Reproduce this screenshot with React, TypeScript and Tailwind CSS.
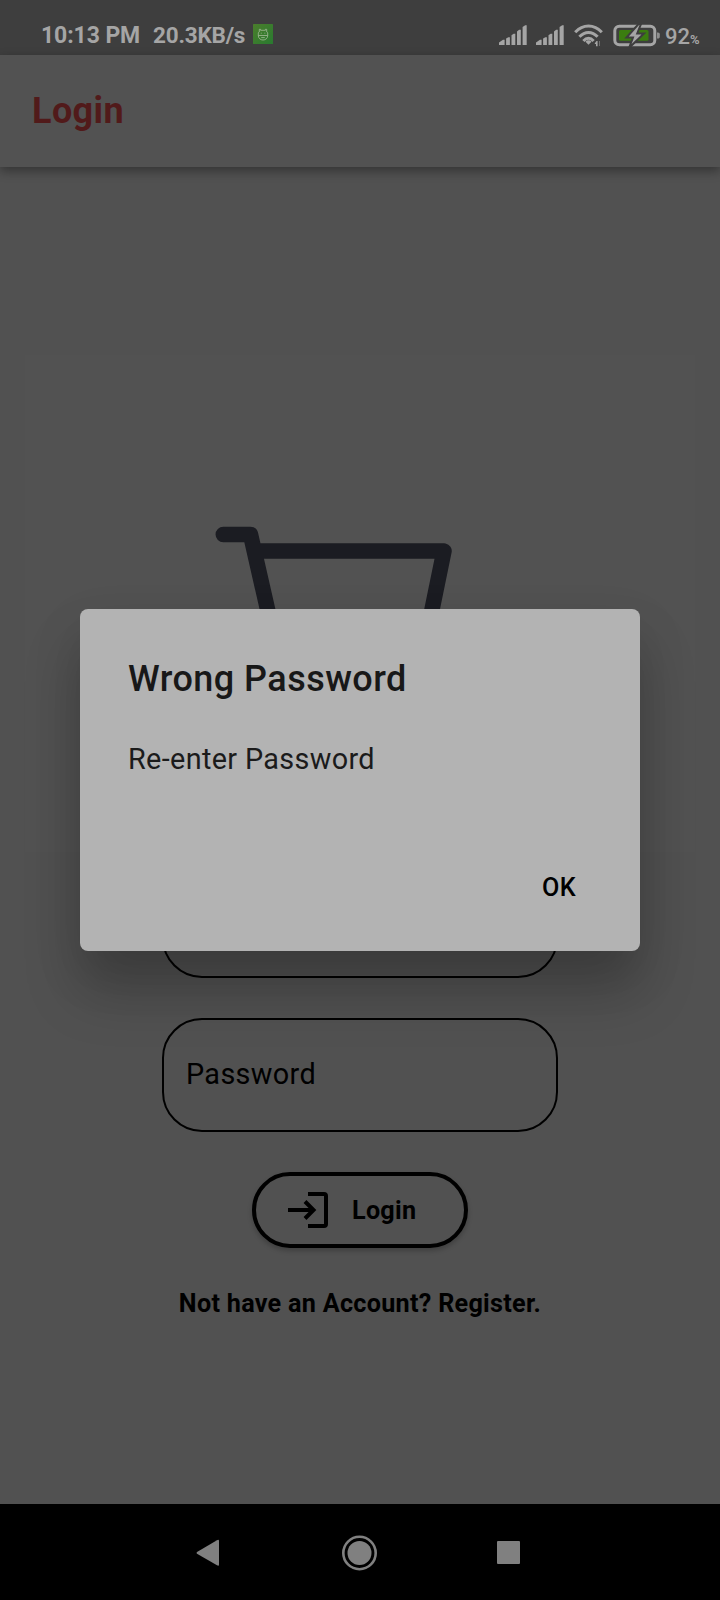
import React from "react";

function Signal() {
  return (
    <svg width="28" height="20" viewBox="0 0 28 20" fill="#a5a5a5" className="block shrink-0">
      <path d="M0 20V17.5L4 14.8H5.6V20Z" />
      <path d="M7.1 20V13.6L9.3 12.3H10.9V20Z" />
      <path d="M12.5 20V10.2L14.6 8.7H16.3V20Z" />
      <path d="M18 20V6.5L20.1 4.8H21.8V20Z" />
      <path d="M23.6 20V2L26.2 0.2H27.7V20Z" />
    </svg>
  );
}

function Wifi() {
  return (
    <svg width="30" height="23" viewBox="0 0 30 23" fill="none" stroke="#a5a5a5" strokeWidth="3" className="block shrink-0">
      <path d="M1.2 8.2C9 0 20 0 27.8 8.2" />
      <path d="M5.4 12.8C11 6.9 18 6.9 23.6 12.8" />
      <path d="M9.4 17C12.6 13.4 16.4 13.4 19.6 17" />
      <path d="M14.5 16.3C16 16.3 17.2 17 17.5 17.7L14.5 20.8L11.5 17.7C12 17 13 16.3 14.5 16.3Z" fill="#a5a5a5" stroke="none" />
      <path d="M22.5 18.7V17L20.8 19.2V20H22V22.2H23.6V17H22.5Z" fill="#a5a5a5" stroke="none" />
      <path d="M25 17H26V22H25Z" fill="#707070" stroke="none" />
    </svg>
  );
}

function Battery() {
  return (
    <svg width="48" height="24" viewBox="0 0 48 24" className="block shrink-0">
      <rect x="1.8" y="2.3" width="40" height="18.4" rx="4.5" fill="none" stroke="#a5a5a5" strokeWidth="3" />
      <rect x="6" y="6" width="29.5" height="10.7" rx="1.5" fill="#3b7d10" />
      <path d="M44 8.5H45C46 8.5 46.8 9.3 46.8 10.3V12.7C46.8 13.7 46 14.5 45 14.5H44Z" fill="#8e8e8e" />
      <path d="M25.5 0L13.5 13.5H20L16 24L31 9.5H24.2L28 0Z" fill="#a5a5a5" stroke="#3e3e3e" strokeWidth="2" />
    </svg>
  );
}

function AppBadge() {
  return (
    <svg width="20" height="20" viewBox="0 0 20 20" className="block shrink-0">
      <defs>
        <linearGradient id="badge" x1="0" y1="0" x2="1" y2="1">
          <stop offset="0" stopColor="#4b7e2c" />
          <stop offset="1" stopColor="#297a30" />
        </linearGradient>
      </defs>
      <rect width="20" height="20" rx="0.6" fill="url(#badge)" />
      <g fill="none" stroke="#a3ba98" strokeWidth="0.8">
        <path d="M6.3 8V5.3H7.6V6.3H12.4V5.3H13.7V8" />
        <path d="M6.3 7.8L5.3 8.8V11.5H14.7V8.8L13.7 7.8" />
        <path d="M5.3 11.5C5.3 14.3 7.5 16 10 16C12.5 16 14.7 14.3 14.7 11.5" />
        <path d="M7.8 9.2H8.7M11.4 9.2H12.3M8.2 13.6H11.8" />
      </g>
    </svg>
  );
}

function StatusBar() {
  return (
    <header className="flex h-[55px] shrink-0 bg-[#3e3e3e] pl-[41px] text-[#a5a5a5]">
      <span className="mt-[22px] w-[112px] whitespace-nowrap text-[23px] leading-[27px] font-bold tracking-[-0.1px]">10:13 PM</span>
      <span className="mt-[22px] w-[100px] whitespace-nowrap text-[22.5px] leading-[27px] font-bold tracking-[-0.2px]">20.3KB/s</span>
      <div className="mt-[24px]"><AppBadge /></div>
      <div className="mt-[25px] ml-[226px] flex gap-[9px]">
        <Signal />
        <Signal />
      </div>
      <div className="mt-[24px] ml-[10px]"><Wifi /></div>
      <div className="mt-[24px] ml-[9px]"><Battery /></div>
      <div className="mt-[23px] ml-[4px] flex items-baseline leading-[27px]">
        <span className="text-[22px] font-medium">92</span>
        <span className="text-[13px] font-bold">%</span>
      </div>
    </header>
  );
}

function Cart() {
  return (
    <svg width="670" height="497" viewBox="25 355 670 497" fill="none" stroke="#1b1c22" strokeWidth="15.5" strokeLinecap="round" strokeLinejoin="round" className="block">
      <path d="M223.3 534.5H250.5L292 717H410L444 551H255" />
      <circle cx="306" cy="765" r="15" />
      <circle cx="396" cy="765" r="15" />
    </svg>
  );
}

export default function App() {
  return (
    <div className="relative flex h-[1600px] w-[720px] flex-col overflow-hidden bg-[#515151] font-[Roboto,sans-serif] text-black">
      <StatusBar />
      <div className="flex h-[112px] shrink-0 items-center bg-[#525252] pl-8 shadow-[0_4px_10px_rgba(0,0,0,0.36)]">
        <h1 className="text-[36px] leading-[42px] font-bold tracking-[0.4px] text-[#511a1a]">Login</h1>
      </div>

      <main className="flex grow flex-col items-center">
        <div className="mt-[188px] h-[497px] w-[670px] bg-[#525252]">
          <Cart />
        </div>
        <div className="mt-3 flex h-[114px] w-[396px] items-center rounded-[40px] border-2 border-black pl-[22px] text-[28.8px]">
          Email
        </div>
        <div className="mt-10 flex h-[114px] w-[396px] items-center rounded-[40px] border-2 border-black pl-[22px] text-[28.8px] tracking-[0.35px]">
          Password
        </div>
        <button className="mt-10 flex h-[76px] w-[216px] items-center rounded-full border-4 border-black bg-[#515151] pl-8 shadow-[0_3px_5px_rgba(0,0,0,0.22)]">
          <svg width="40" height="36" viewBox="0 0 40 36" fill="none" stroke="black" strokeWidth="4" className="block">
            <path d="M0 18H26" />
            <path d="M17 9.5L25.5 18L17 26.5" />
            <path d="M20 2H36Q38 2 38 4V32Q38 34 36 34H20" />
          </svg>
          <span className="ml-6 pt-0.5 text-[25.2px] font-bold tracking-[0.25px]">Login</span>
        </button>
        <p className="mt-[41px] text-[25.2px] leading-[30px] font-bold tracking-[0.28px]">Not have an Account? Register.</p>
      </main>

      <nav className="flex h-24 shrink-0 items-center bg-black pt-px pl-[196px]">
        <svg width="24" height="28" viewBox="0 0 24 28" fill="#808080">
          <path d="M1 13L21 1.2Q23 0.2 23 2V25.5Q23 27.4 21 26.3L1 14.8Q0 14 1 13Z" />
        </svg>
        <svg width="36" height="36" viewBox="0 0 36 36" className="ml-[122px]">
          <circle cx="17.5" cy="18" r="16.2" fill="none" stroke="#808080" strokeWidth="2.6" />
          <circle cx="17.5" cy="18" r="12" fill="#808080" />
        </svg>
        <div className="ml-[119px] h-[23px] w-[23px] rounded-[1px] bg-[#808080]" />
      </nav>

      <div role="dialog" className="absolute top-[608.5px] left-[80px] flex h-[342px] w-[560px] flex-col rounded-lg bg-[#b3b3b3] pl-12 shadow-[0_40px_56px_0px_rgba(0,0,0,0.22),0_20px_50px_4px_rgba(0,0,0,0.08)]">
        <h2 className="mt-[49px] text-[36px] leading-[42px] font-medium tracking-[0.45px] text-[#181818]">Wrong Password</h2>
        <p className="mt-[42px] text-[28.8px] leading-[34px] tracking-[0.35px] text-[#1b1b1b]">Re-enter Password</p>
        <button className="mt-[97px] mr-[64px] self-end text-[25.2px] leading-[30px] font-medium tracking-[0.4px]">OK</button>
      </div>
    </div>
  );
}
